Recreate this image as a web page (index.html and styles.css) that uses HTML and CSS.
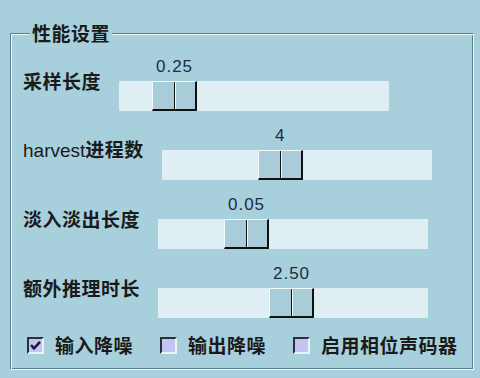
FILE: index.html
```html
<!DOCTYPE html>
<html lang="zh-CN">
<head>
<meta charset="utf-8">
<title>性能设置</title>
<link rel="stylesheet" href="styles.css">
</head>
<body>
<fieldset class="frame">
  <legend class="frame-title">性能设置</legend>
  <div class="rows">
    <div class="row">
      <span class="label">采样长度</span>
      <div class="scale">
        <div class="trough"></div>
        <div class="knob" style="left:33px"><span class="val">0.25</span><span class="thumb"></span></div>
      </div>
    </div>
    <div class="row">
      <span class="label"><span class="latin">harvest</span>进程数</span>
      <div class="scale">
        <div class="trough"></div>
        <div class="knob" style="left:96px"><span class="val">4</span><span class="thumb"></span></div>
      </div>
    </div>
    <div class="row">
      <span class="label">淡入淡出长度</span>
      <div class="scale">
        <div class="trough"></div>
        <div class="knob" style="left:66px"><span class="val">0.05</span><span class="thumb"></span></div>
      </div>
    </div>
    <div class="row">
      <span class="label">额外推理时长</span>
      <div class="scale">
        <div class="trough"></div>
        <div class="knob" style="left:111px"><span class="val">2.50</span><span class="thumb"></span></div>
      </div>
    </div>
    <div class="checks">
      <label class="check">
        <span class="box">
          <svg class="tick" viewBox="0 0 13 13" width="13" height="13"><path d="M2 6 L5 9.3 L11 2.8" fill="none" stroke="#1a1a38" stroke-width="2.6"/></svg>
        </span>
        <span class="check-text">输入降噪</span>
      </label>
      <label class="check">
        <span class="box"></span>
        <span class="check-text">输出降噪</span>
      </label>
      <label class="check">
        <span class="box"></span>
        <span class="check-text">启用相位声码器</span>
      </label>
    </div>
  </div>
</fieldset>
</body>
</html>
```
FILE: styles.css
```css
html, body {
  margin: 0;
  padding: 0;
}
body {
  width: 480px;
  height: 378px;
  background: #a8d0dc;
  padding: 23px 0 0 10px;
  box-sizing: border-box;
  overflow: hidden;
  font-family: "Noto Sans CJK SC", "Liberation Sans", sans-serif;
  color: #1a1a1a;
}
.frame {
  margin: 0;
  width: 464px;
  box-sizing: border-box;
  padding: 14px 0 14px 12px;
  border: 1px solid;
  border-color: #5f7d89 #eef8fa #eef8fa #5f7d89;
  box-shadow: inset 1px 1px 0 #eef8fa, inset -1px -1px 0 #5f7d89;
  min-width: 0;
}
.frame-title {
  margin-left: 7px;
  padding: 0 2px;
  background: #a8d0dc;
  font-size: 19px;
  font-weight: bold;
  line-height: 20px;
  letter-spacing: 0.5px;
}
.rows {
  display: flex;
  flex-direction: column;
  gap: 15px;
}
.row {
  display: flex;
  align-items: center;
  gap: 18px;
  height: 54px;
}
.label {
  font-size: 19px;
  font-weight: bold;
  line-height: 20px;
  letter-spacing: 0.5px;
  margin-bottom: 7px;
  white-space: nowrap;
}
.latin {
  font-family: "Liberation Sans", sans-serif;
  font-weight: normal;
  letter-spacing: 0;
}
.scale {
  position: relative;
  width: 270px;
  height: 54px;
  flex: none;
}
.trough {
  margin-top: 24px;
  height: 30px;
  background: #dfeef2;
}
.knob {
  position: absolute;
  top: 0;
  width: 45px;
  display: flex;
  flex-direction: column;
  align-items: center;
}
.val {
  font-family: "Liberation Sans", sans-serif;
  font-size: 17px;
  line-height: 19px;
  letter-spacing: 1px;
  color: #1d2a45;
  margin-bottom: 5px;
  white-space: nowrap;
}
.thumb {
  position: relative;
  display: block;
  width: 45px;
  height: 30px;
  box-sizing: border-box;
  background: #a9cdd8;
  border-style: solid;
  border-width: 1px 2px 2px 1px;
  border-color: #f2fafc #111 #111 #f2fafc;
}
.thumb::after {
  content: "";
  position: absolute;
  top: 0;
  bottom: 0;
  left: 21px;
  width: 1px;
  background: #111;
  border-right: 1px solid #f2fafc;
}
.checks {
  display: flex;
  align-items: center;
  gap: 27px;
  height: 20px;
  margin-top: 2px;
  padding-left: 4px;
}
.check {
  display: flex;
  align-items: center;
  gap: 11px;
}
.box {
  display: block;
  width: 17px;
  height: 17px;
  box-sizing: border-box;
  background: #c4c4f4;
  border-style: solid;
  border-width: 2px;
  border-color: #2a2f38 #e8f4f6 #e8f4f6 #2a2f38;
}
.tick {
  display: block;
}
.check-text {
  font-size: 19px;
  font-weight: bold;
  line-height: 20px;
  letter-spacing: 0.5px;
}
```
